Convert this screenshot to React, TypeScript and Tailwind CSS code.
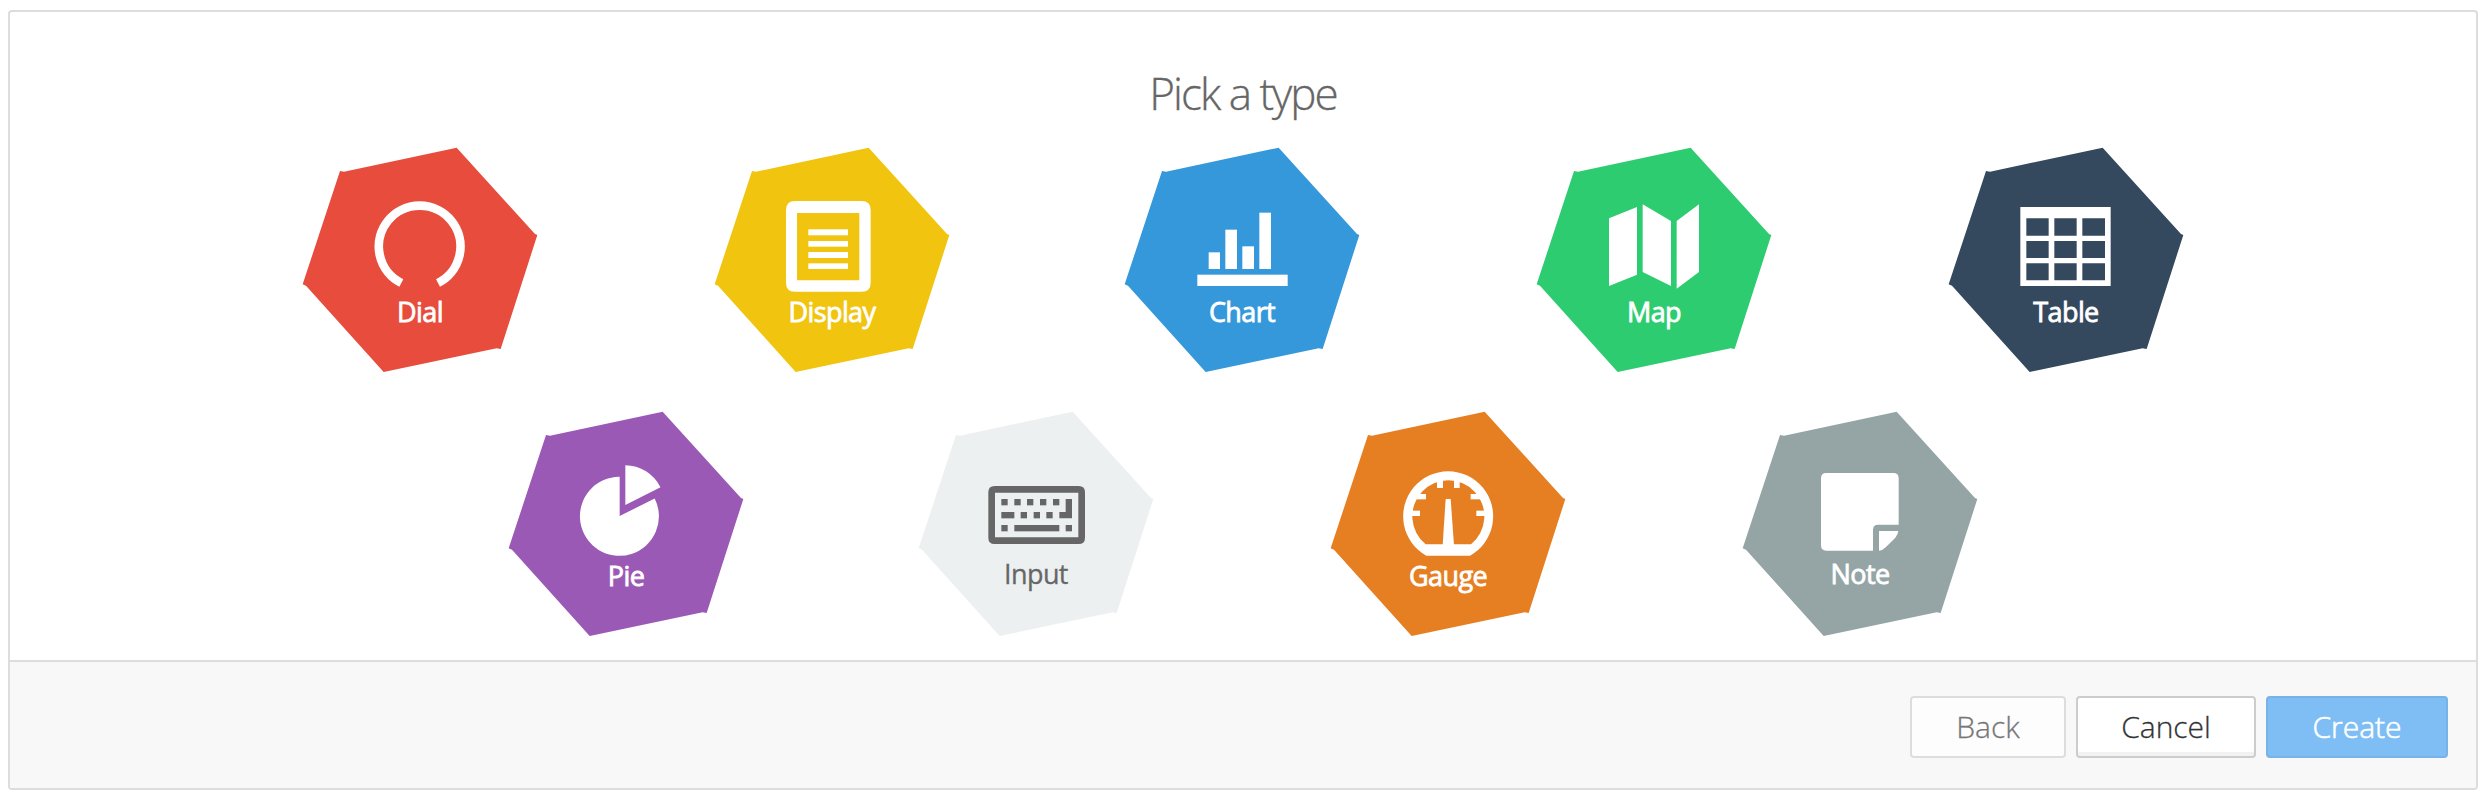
import type { ReactNode } from "react";

type Tile = {
  label: string;
  fill: string;
  text: string;
  labelPos: string;
  origin: string;
  icon: ReactNode;
};

const HEX =
  "114,75 126,77 464,5 699,264 706,267 596,609 584,607 245,678 12,419 2,415";

const rects = (list: number[][]) =>
  list.map(([x1, y1, x2, y2]) => (
    <rect key={`${x1}-${y1}`} x={x1} y={y1} width={x2 - x1} height={y2 - y1} />
  ));

const DialIcon = (
  <path
    d="M334 459A122.5 122.5 0 1 1 444 459"
    fill="none"
    stroke="currentColor"
    strokeWidth="26"
  />
);

const DisplayIcon = (
  <>
    <path
      fillRule="evenodd"
      d="M285 213H485Q512 213 512 240V458Q512 485 485 485H285Q258 485 258 458V240Q258 213 285 213ZM291 249V451H478V249Z"
    />
    {rects([
      [325, 298, 444, 316],
      [325, 333, 444, 350],
      [325, 366, 444, 384],
      [325, 400, 444, 417],
    ])}
  </>
);

const ChartIcon = rects([
  [296, 367, 330, 417],
  [346, 299, 381, 417],
  [397, 349, 432, 417],
  [448, 248, 483, 417],
  [262, 434, 533, 468],
]);

const MapIcon = (
  <path d="M252 265 336 231V434L252 468ZM353 223 438 273V468L353 426ZM455 273 522 223V426L455 476Z" />
);

const TableIcon = (
  <path
    fillRule="evenodd"
    d="M256 231H527V468H256ZM274 265V317H341V265ZM358 265V317H425V265ZM442 265V317H510V265ZM274 333V384H341V333ZM358 333V384H425V333ZM442 333V384H510V333ZM274 400V451H341V400ZM358 400V451H425V400ZM442 400V451H510V400Z"
  />
);

const PieIcon = (
  <path d="M359 245.5A118.5 118.5 0 1 0 464 310.500L359 363ZM376 211A119 119 0 0 1 481.500 277L376 330Z" />
);

const InputIcon = (
  <>
    <path
      fillRule="evenodd"
      d="M254 273H506Q525 273 525 292V428Q525 447 506 447H254Q235 447 235 428V292Q235 273 254 273ZM255 293V427H505V293Z"
    />
    {rects([
      [274, 312, 293, 331],
      [313, 312, 332, 331],
      [351, 312, 370, 331],
      [390, 312, 409, 331],
      [429, 312, 448, 331],
      [274, 351, 313, 370],
      [332, 351, 351, 370],
      [371, 351, 390, 370],
      [409, 351, 428, 370],
      [274, 390, 293, 409],
      [313, 390, 448, 409],
      [467, 390, 486, 409],
    ])}
    <path d="M467 312H486V370H448V351H467Z" />
  </>
);

const GaugeIcon = (
  <>
    <path
      fillRule="evenodd"
      d="M319 482A135 135 0 1 1 450 482ZM317 448H453A108 108 0 1 0 317 448Z"
    />
    {rects([
      [351, 250, 369, 279],
      [402, 250, 419, 279],
      [285, 297, 318, 313],
      [452, 297, 485, 313],
      [270, 347, 300, 363],
      [469, 347, 500, 363],
    ])}
    <path d="M377 312H392L402 450H368Z" />
  </>
);

const NoteIcon = (
  <path d="M274 234H475Q491 234 491 250V389H430Q414 389 414 405V467H274Q258 467 258 451V250Q258 234 274 234ZM432 408H490Q489 419 481 428L453 456Q443 466 432 467Z" />
);

const HIGH = "pt-[147px]";
const LOW = "pt-[145px]";
const LIGHT = "text-white [-webkit-text-stroke:0.8px_white]";
const DARK = "text-[#666666] [-webkit-text-stroke:0.3px_#666666]";

const firstRow: Tile[] = [
  { label: "Dial", fill: "fill-[#e74c3c]", text: LIGHT, labelPos: HIGH, origin: "translate(-36 -48)", icon: DialIcon },
  { label: "Display", fill: "fill-[#f1c40f]", text: LIGHT, labelPos: HIGH, origin: "translate(-42 -48)", icon: DisplayIcon },
  { label: "Chart", fill: "fill-[#3498db]", text: LIGHT, labelPos: HIGH, origin: "translate(-42 -48)", icon: ChartIcon },
  { label: "Map", fill: "fill-[#2ecc71]", text: LIGHT, labelPos: HIGH, origin: "translate(-33 -48)", icon: MapIcon },
  { label: "Table", fill: "fill-[#34495e]", text: LIGHT, labelPos: HIGH, origin: "translate(-39 -48)", icon: TableIcon },
];

const secondRow: Tile[] = [
  { label: "Pie", fill: "fill-[#9b59b6]", text: LIGHT, labelPos: HIGH, origin: "translate(-24 -45)", icon: PieIcon },
  { label: "Input", fill: "fill-[#ecf0f1]", text: DARK, labelPos: LOW, origin: "translate(-24 -45)", icon: InputIcon },
  { label: "Gauge", fill: "fill-[#e67e22]", text: LIGHT, labelPos: HIGH, origin: "translate(-30 -45)", icon: GaugeIcon },
  { label: "Note", fill: "fill-[#95a5a6]", text: LIGHT, labelPos: LOW, origin: "translate(-21 -45)", icon: NoteIcon },
];

function TypeTile({ tile }: { tile: Tile }) {
  return (
    <button type="button" className={`grid h-[226px] w-[236px] ${tile.text}`}>
      <svg viewBox="0 0 708 678" className="col-start-1 row-start-1 h-[226px] w-[236px] overflow-visible">
        <polygon points={HEX} className={tile.fill} />
        <g transform={tile.origin} fill="currentColor">
          {tile.icon}
        </g>
      </svg>
      <span className={`col-start-1 row-start-1 text-center text-[27px] leading-[38px] tracking-[-0.6px] ${tile.labelPos}`}>
        {tile.label}
      </span>
    </button>
  );
}

export default function App() {
  return (
    <div className="h-[798px] bg-white pt-[10px] pl-2 font-['Open_Sans',sans-serif]">
      <div className="flex h-[780px] w-[2470px] flex-col overflow-hidden rounded-[4px] border-2 border-[#dddddd] bg-white">
        <main className="flex-1">
          <h1 className="h-[134px] pt-[49px] text-center text-[44px] leading-[64px] font-light tracking-[-2px] text-[#666666] [-webkit-text-stroke:0.3px_#666666]">
            Pick a type
          </h1>
          <div className="grid grid-cols-[412px_410px_412px_412px_236px] pl-[292px]">
            {firstRow.map((t) => (
              <TypeTile key={t.label} tile={t} />
            ))}
          </div>
          <div className="mt-[38px] grid grid-cols-[410px_412px_412px_236px] pl-[498px]">
            {secondRow.map((t) => (
              <TypeTile key={t.label} tile={t} />
            ))}
          </div>
        </main>
        <footer className="flex h-[128px] items-start justify-end gap-[10px] border-t-2 border-[#dddddd] bg-[#f8f8f8] pt-[34px] pr-7 text-[30px] font-light">
          <button type="button" className="h-[62px] w-[156px] rounded-[4px] border-2 border-[#dddddd] bg-[#fdfdfd] pb-[2px] text-[#777777] [-webkit-text-stroke:0.3px_#777777]">
            Back
          </button>
          <button type="button" className="h-[62px] w-[180px] rounded-[4px] border-2 border-[#cccccc] bg-white pb-[2px] text-[#333333] shadow-[inset_0_-4px_0_#f2f2f2] [-webkit-text-stroke:0.3px_#333333]">
            Cancel
          </button>
          <button type="button" className="h-[62px] w-[182px] rounded-[4px] border-2 border-[#77b3e9] bg-[#7ebef5] pb-[2px] text-white [-webkit-text-stroke:0.6px_white]">
            Create
          </button>
        </footer>
      </div>
    </div>
  );
}
